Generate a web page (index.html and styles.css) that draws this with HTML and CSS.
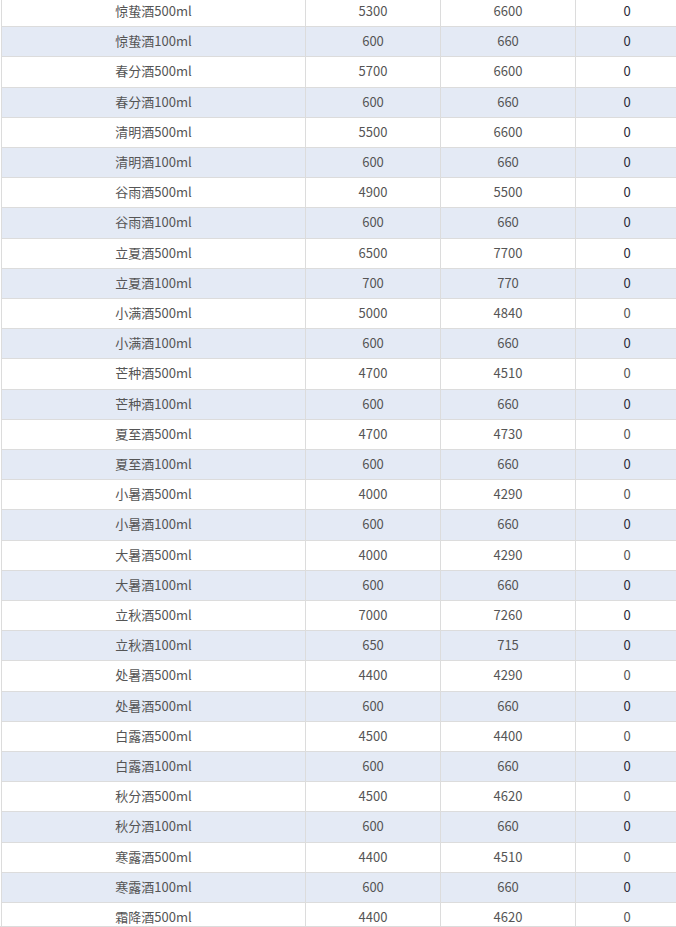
FILE: index.html
```html
<!DOCTYPE html>
<html lang="zh-CN">
<head>
<meta charset="utf-8">
<title>价格表</title>
<link rel="stylesheet" href="styles.css">
</head>
<body>
<div class="frame">
<table class="grid">
<colgroup>
<col class="c-name"><col class="c-num"><col class="c-num"><col class="c-last">
</colgroup>
<tbody>
<tr><td>惊蛰酒500ml</td><td>5300</td><td>6600</td><td class="z dark">0</td></tr>
<tr><td>惊蛰酒100ml</td><td>600</td><td>660</td><td class="z dark">0</td></tr>
<tr><td>春分酒500ml</td><td>5700</td><td>6600</td><td class="z dark">0</td></tr>
<tr><td>春分酒100ml</td><td>600</td><td>660</td><td class="z dark">0</td></tr>
<tr><td>清明酒500ml</td><td>5500</td><td>6600</td><td class="z dark">0</td></tr>
<tr><td>清明酒100ml</td><td>600</td><td>660</td><td class="z dark">0</td></tr>
<tr><td>谷雨酒500ml</td><td>4900</td><td>5500</td><td class="z dark">0</td></tr>
<tr><td>谷雨酒100ml</td><td>600</td><td>660</td><td class="z dark">0</td></tr>
<tr><td>立夏酒500ml</td><td>6500</td><td>7700</td><td class="z dark">0</td></tr>
<tr><td>立夏酒100ml</td><td>700</td><td>770</td><td class="z dark">0</td></tr>
<tr><td>小满酒500ml</td><td>5000</td><td>4840</td><td class="z">0</td></tr>
<tr><td>小满酒100ml</td><td>600</td><td>660</td><td class="z dark">0</td></tr>
<tr><td>芒种酒500ml</td><td>4700</td><td>4510</td><td class="z">0</td></tr>
<tr><td>芒种酒100ml</td><td>600</td><td>660</td><td class="z dark">0</td></tr>
<tr><td>夏至酒500ml</td><td>4700</td><td>4730</td><td class="z">0</td></tr>
<tr><td>夏至酒100ml</td><td>600</td><td>660</td><td class="z dark">0</td></tr>
<tr><td>小暑酒500ml</td><td>4000</td><td>4290</td><td class="z">0</td></tr>
<tr><td>小暑酒100ml</td><td>600</td><td>660</td><td class="z dark">0</td></tr>
<tr><td>大暑酒500ml</td><td>4000</td><td>4290</td><td class="z">0</td></tr>
<tr><td>大暑酒100ml</td><td>600</td><td>660</td><td class="z dark">0</td></tr>
<tr><td>立秋酒500ml</td><td>7000</td><td>7260</td><td class="z dark">0</td></tr>
<tr><td>立秋酒100ml</td><td>650</td><td>715</td><td class="z dark">0</td></tr>
<tr><td>处暑酒500ml</td><td>4400</td><td>4290</td><td class="z">0</td></tr>
<tr><td>处暑酒500ml</td><td>600</td><td>660</td><td class="z dark">0</td></tr>
<tr><td>白露酒500ml</td><td>4500</td><td>4400</td><td class="z">0</td></tr>
<tr><td>白露酒100ml</td><td>600</td><td>660</td><td class="z dark">0</td></tr>
<tr><td>秋分酒500ml</td><td>4500</td><td>4620</td><td class="z">0</td></tr>
<tr><td>秋分酒100ml</td><td>600</td><td>660</td><td class="z dark">0</td></tr>
<tr><td>寒露酒500ml</td><td>4400</td><td>4510</td><td class="z">0</td></tr>
<tr><td>寒露酒100ml</td><td>600</td><td>660</td><td class="z dark">0</td></tr>
<tr><td>霜降酒500ml</td><td>4400</td><td>4620</td><td class="z">0</td></tr>
</tbody>
</table>
</div>
</body>
</html>
```
FILE: styles.css
```css
html, body {
  margin: 0;
  padding: 0;
  background: #ffffff;
  overflow: hidden;
}

.frame {
  height: 926px;
  border-bottom: 1px solid #dcdcdc;
  overflow: hidden;
}

.grid {
  border-collapse: collapse;
  table-layout: fixed;
  width: 677px;
  margin: -4px 0 0 1px;
  font-family: "Noto Sans CJK SC", "Noto Sans", sans-serif;
  font-size: 13px;
  color: #555555;
}

.c-name { width: 304px; }
.c-num { width: 135px; }
.c-last { width: 103px; }

.grid td {
  border: 1px solid #dcdcdc;
  padding: 0 0 1px 0;
  height: 28.2px;
  line-height: 28.2px;
  text-align: center;
  vertical-align: middle;
  white-space: nowrap;
}

.grid tr:nth-child(even) td {
  background: #e4eaf5;
}

.grid td.dark {
  color: #2a2a3a;
}
```
